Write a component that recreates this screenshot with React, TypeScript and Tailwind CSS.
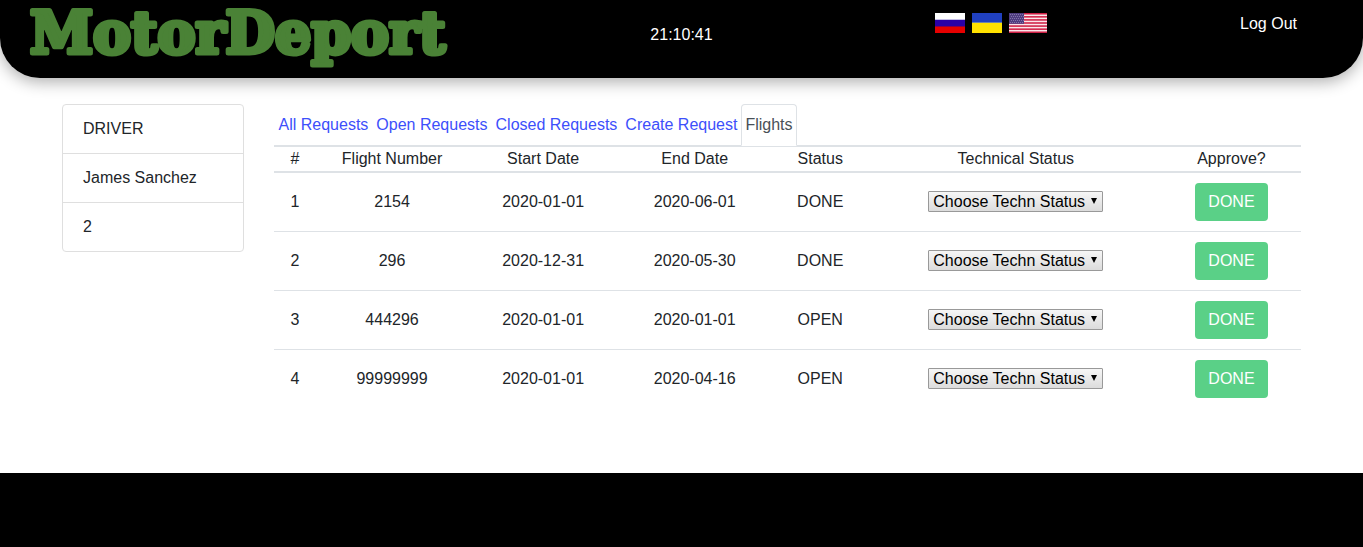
import React, { useState } from "react";

const details = ["DRIVER", "James Sanchez", "2"];
const tabs = ["All Requests", "Open Requests", "Closed Requests", "Create Request", "Flights"];
const columns = [
  { label: "#", width: "w-[43px]" },
  { label: "Flight Number", width: "w-[151px]" },
  { label: "Start Date", width: "w-[151px]" },
  { label: "End Date", width: "w-[152px]" },
  { label: "Status", width: "w-[99px]" },
  { label: "Technical Status", width: "w-[292px]" },
  { label: "Approve?", width: "w-[139px]" },
];
const flights = [
  { number: "2154", start: "2020-01-01", end: "2020-06-01", status: "DONE" },
  { number: "296", start: "2020-12-31", end: "2020-05-30", status: "DONE" },
  { number: "444296", start: "2020-01-01", end: "2020-01-01", status: "OPEN" },
  { number: "99999999", start: "2020-01-01", end: "2020-04-16", status: "OPEN" },
];

function Logo() {
  return (
    <svg width="430" height="78" viewBox="0 0 430 78" role="img" aria-label="MotorDeport" className="block overflow-visible">
      <text
        x="2"
        y="53"
        fill="#4a8236"
        stroke="#4a8236"
        strokeWidth="5"
        strokeLinejoin="round"
        className="font-['DejaVu_Serif',serif] text-[57px] font-bold"
      >
        MotorDeport
      </text>
    </svg>
  );
}

function RussianFlag() {
  return (
    <svg width="30" height="20" viewBox="0 0 30 20" aria-hidden="true">
      <rect width="30" height="7" fill="#fff" />
      <rect y="6" width="30" height="1" fill="#c4bde8" />
      <rect y="7" width="30" height="6" fill="#2a00a8" />
      <rect y="13" width="30" height="1" fill="#8e0048" />
      <rect y="14" width="30" height="6" fill="#e60000" />
    </svg>
  );
}

function UkrainianFlag() {
  return (
    <svg width="30" height="20" viewBox="0 0 30 20" aria-hidden="true">
      <rect width="30" height="10" fill="#2040c0" />
      <rect y="9" width="30" height="1" fill="#6f84a8" />
      <rect y="10" width="30" height="10" fill="#ffe100" />
    </svg>
  );
}

function AmericanFlag() {
  const stars = [];
  for (let row = 0; row < 5; row++) {
    for (let col = 0; col < 7; col++) {
      stars.push(
        <rect key={`${row}-${col}`} x={1 + col * 2 + (row % 2 ? 1 : 0)} y={1 + row * 2} width="1" height="1" fill="#8073a8" />
      );
    }
  }
  return (
    <svg width="38" height="20" viewBox="0 0 38 20" aria-hidden="true">
      <rect width="38" height="20" fill="#fbe6ea" />
      {[0, 1, 2, 3, 4, 5, 6].map((i) => (
        <rect key={i} y={(i * 40) / 13} width="38" height={20 / 13} fill="#cf1f45" />
      ))}
      <rect width="15" height="10.8" fill="#4f3d80" />
      {stars}
    </svg>
  );
}

function StatusSelect({ row }: { row: number }) {
  return (
    <div className="relative mx-auto w-fit pb-px">
      <select
        aria-label={`Technical status of flight ${row}`}
        className="block h-[21px] w-[175px] appearance-none rounded-[1px] border border-[#999] bg-linear-to-b from-[#f6f6f6] to-[#dcdcdc] pl-1 text-base leading-[19px] text-black"
      >
        <option>Choose Techn Status</option>
        <option>Serviceable</option>
        <option>Broken</option>
      </select>
      <svg className="pointer-events-none absolute top-[7px] right-[6px]" width="6" height="6" viewBox="0 0 6 6" aria-hidden="true">
        <path d="M0 0h6L3 6z" fill="#000" />
      </svg>
    </div>
  );
}

export default function App() {
  const [active, setActive] = useState("Flights");
  return (
    <div className="flex min-h-screen flex-col bg-white font-['Liberation_Sans',Arial,sans-serif] text-base leading-6 text-[#212529]">
      <header className="grid h-[78px] grid-cols-3 rounded-b-[40px] bg-black text-white shadow-[0_4px_16px_rgba(0,0,0,0.32)]">
        <a href="#" className="pl-7">
          <Logo />
        </a>
        <time className="pt-[23px] text-center">21:10:41</time>
        <div className="flex items-start justify-between pt-3 pr-[66px] pl-[26px]">
          <div className="flex gap-[7px] pt-px">
            <button type="button" aria-label="Russian"><RussianFlag /></button>
            <button type="button" aria-label="Ukrainian"><UkrainianFlag /></button>
            <button type="button" aria-label="English"><AmericanFlag /></button>
          </div>
          <a href="#">Log Out</a>
        </div>
      </header>

      <main className="grid flex-1 grid-cols-12 items-start gap-[30px] px-[62px] pt-[26px] pb-16">
        <ul className="col-span-2 divide-y divide-[#dfdfdf] rounded border border-[#dfdfdf]">
          {details.map((item) => (
            <li key={item} className="px-5 py-3">{item}</li>
          ))}
        </ul>

        <section className="col-span-10">
          <nav className="flex border-b border-[#dee2e6] pl-px">
            {tabs.map((tab) => (
              <a
                key={tab}
                href="#"
                onClick={() => setActive(tab)}
                aria-current={tab === active ? "page" : undefined}
                className={
                  tab === active
                    ? "-mb-px rounded-t border border-[#dee2e6] border-b-white bg-white px-[3px] py-2 text-[#495057]"
                    : "-mb-px border border-transparent px-[3px] py-2 text-[#3d4ffb]"
                }
              >
                {tab}
              </a>
            ))}
          </nav>
          <table className="w-full table-fixed border-separate border-spacing-0 text-center">
            <thead>
              <tr>
                {columns.map((c) => (
                  <th key={c.label} className={`${c.width} border-t border-b-2 border-t-[#dee2e6] border-b-[#dee2e6] p-0 font-normal`}>
                    {c.label}
                  </th>
                ))}
              </tr>
            </thead>
            <tbody className="[&>tr+tr>td]:border-t [&>tr+tr>td]:border-[#dee2e6] [&_td]:py-[10px]">
              {flights.map((f, i) => (
                <tr key={f.number}>
                  <td>{i + 1}</td>
                  <td>{f.number}</td>
                  <td>{f.start}</td>
                  <td>{f.end}</td>
                  <td>{f.status}</td>
                  <td><StatusSelect row={i + 1} /></td>
                  <td>
                    <button type="button" className="mx-auto block h-[38px] rounded bg-[#5ad087] px-[13px] text-white">
                      DONE
                    </button>
                  </td>
                </tr>
              ))}
            </tbody>
          </table>
        </section>
      </main>

      <footer className="h-[74px] bg-black" />
    </div>
  );
}
